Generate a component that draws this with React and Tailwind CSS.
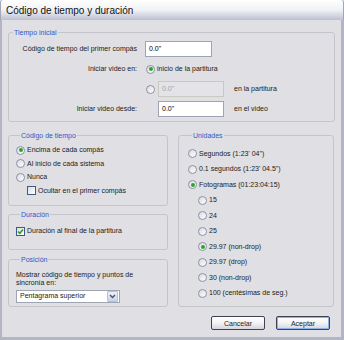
import React from "react";

const F = "font-['Liberation_Sans',Arial,sans-serif]";

function Radio({ checked, label, rowH = "h-[15.5px]", disabled }) {
  return (
    <div className={`flex items-center ${rowH}`}>
      <span className="w-[9px] h-[9px] shrink-0 rounded-full border border-[#8b91a6] bg-gradient-to-br from-[#d9dae2] to-white flex items-center justify-center">
        {checked && <span className="w-[4px] h-[4px] rounded-full bg-[#2da32d]" />}
      </span>
      {label && (
        <span className={`ml-[2px] whitespace-nowrap ${disabled ? "text-[#9a9a9a]" : ""}`}>{label}</span>
      )}
    </div>
  );
}

function Check({ checked, label }) {
  return (
    <div className="flex items-center h-[14px]">
      <span className="w-[9px] h-[9px] shrink-0 border border-[#3f5a84] bg-gradient-to-br from-[#dcdde4] to-white flex items-center justify-center">
        {checked && (
          <svg width="7" height="7" viewBox="0 0 7 7">
            <path d="M1 3.5 L2.8 5.3 L6 1.5" fill="none" stroke="#27a327" strokeWidth="1.6" />
          </svg>
        )}
      </span>
      <span className="ml-[2px] whitespace-nowrap">{label}</span>
    </div>
  );
}

function Group({ title, className = "", children }) {
  return (
    <fieldset className={`border border-[#c4c4cb] rounded-[3px] ${className}`}>
      <legend className="ml-[4px] px-[1px] leading-[9px] text-[#2e59c8]">{title}</legend>
      {children}
    </fieldset>
  );
}

function TextBox({ value, disabled, className = "" }) {
  return (
    <div
      className={`h-[16px] border flex items-center pl-[3px] ${
        disabled ? "border-[#c9c9c2] bg-[#e4e3e7] text-[#a3a3a3]" : "border-[#9ea5b2] bg-white text-black"
      } ${className}`}
    >
      {value}
    </div>
  );
}

function Button({ children, primary }) {
  return (
    <button
      className={`w-[54px] h-[14px] rounded-[2px] border border-[#3d4257] bg-gradient-to-b from-white via-[#f3f3f5] to-[#d4d5dc] flex items-center justify-center leading-none ${
        primary ? "shadow-[inset_0_0_0_1px_#8fb0e6]" : ""
      }`}
    >
      {children}
    </button>
  );
}

export default function App() {
  return (
    <div className={`w-[344px] h-[340px] flex flex-col bg-[#e0dfe3] text-[7px] text-[#1b1b1b] ${F}`}>
      {/* Title bar */}
      <div className="h-[20px] shrink-0 flex items-center pl-[5px] rounded-t-[3px] border-x border-[#a4a6b6] bg-gradient-to-b from-white via-[#f1f2f6] to-[#bcc0d0]">
        <span className="text-[10px] text-[#111]">Código de tiempo y duración</span>
      </div>

      {/* Body */}
      <div className="flex-1 flex flex-col border-l-[2px] border-r-[3px] border-b-[3px] border-[#b3b5c4] pl-[6px] pr-[6px] pt-[8px] pb-[7px]">
        <Group title="Tiempo inicial" className="pt-[4px] pb-[4px]">
          <div className="flex flex-col gap-[4px]">
            <div className="flex items-center h-[16px]">
              <span className="w-[128px] text-right whitespace-nowrap">Código de tiempo del primer compás</span>
              <TextBox value={'0.0"'} className="ml-[8px] w-[67px]" />
            </div>
            <div className="flex items-center h-[16px]">
              <span className="w-[128px] text-right whitespace-nowrap">Iniciar video en:</span>
              <div className="ml-[9px]">
                <Radio checked label="inicio de la partitura" rowH="h-[16px]" />
              </div>
            </div>
            <div className="flex items-center h-[16px]">
              <span className="w-[128px]" />
              <div className="ml-[9px]">
                <Radio rowH="h-[16px]" />
              </div>
              <TextBox value={'0.0"'} disabled className="ml-[3px] w-[66px]" />
              <span className="ml-[10px] whitespace-nowrap">en la partitura</span>
            </div>
            <div className="flex items-center h-[16px]">
              <span className="w-[128px] text-right whitespace-nowrap">Iniciar video desde:</span>
              <TextBox value={'0.0"'} className="ml-[21px] w-[66px]" />
              <span className="ml-[10px] whitespace-nowrap">en el video</span>
            </div>
          </div>
        </Group>

        <div className="flex gap-[10px] mt-[9px]">
          {/* Left column */}
          <div className="w-[160px] flex flex-col">
            <Group title="Código de tiempo" className="pt-[3.5px] pb-[7.5px] pl-[7px]">
              <Radio checked label="Encima de cada compás" rowH="h-[13.5px]" />
              <Radio label="Al inicio de cada sistema" rowH="h-[13.5px]" />
              <Radio label="Nunca" rowH="h-[13.5px]" />
              <div className="ml-[11px] h-[13.5px] flex items-center">
                <Check label="Ocultar en el primer compás" />
              </div>
            </Group>

            <Group title="Duración" className="mt-[4px] pt-[5px] pb-[11px] pl-[7px]">
              <Check checked label="Duración al final de la partitura" />
            </Group>

            <Group title="Posición" className="mt-[5px] pt-[7px] pb-[3px] pl-[7px]">
              <p className="leading-[8px] whitespace-nowrap">
                Mostrar código de tiempo y puntos de
                <br />
                sincronía en:
              </p>
              <div className="mt-[3px] w-[104px] h-[13px] bg-white border border-[#9ea5b2] flex items-center">
                <span className="flex-1 pl-[3px] whitespace-nowrap">Pentagrama superior</span>
                <span className="w-[11px] h-[11px] mr-px border border-[#b4c0da] rounded-[1px] bg-gradient-to-b from-[#eef1fa] to-[#c9d2ea] flex items-center justify-center">
                  <svg width="7" height="5" viewBox="0 0 7 5">
                    <path d="M1 1 L3.5 3.5 L6 1" fill="none" stroke="#4d5670" strokeWidth="1.5" />
                  </svg>
                </span>
              </div>
            </Group>
          </div>

          {/* Right column */}
          <Group title="Unidades" className="w-[156px] pt-[6px] pb-[5px] pl-[9px]">
            <Radio label={'Segundos (1:23\' 04")'} />
            <Radio label={'0.1 segundos (1:23\' 04.5")'} />
            <Radio checked label="Fotogramas (01:23:04:15)" />
            <div className="pl-[10px]">
              <Radio label="15" />
              <Radio label="24" />
              <Radio label="25" />
              <Radio checked label="29.97 (non-drop)" />
              <Radio label="29.97 (drop)" />
              <Radio label="30 (non-drop)" />
              <Radio label="100 (centésimas de seg.)" />
            </div>
          </Group>
        </div>

        <div className="mt-[9px] flex justify-end gap-[11px] pr-[5px]">
          <Button>Cancelar</Button>
          <Button primary>Aceptar</Button>
        </div>
      </div>
    </div>
  );
}
